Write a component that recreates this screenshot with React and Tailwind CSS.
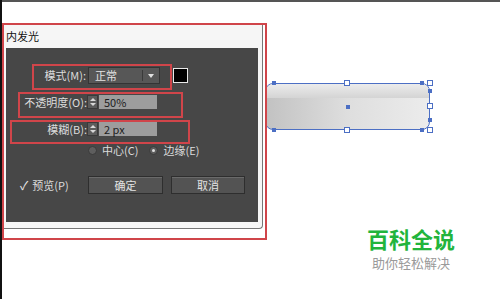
import React from 'react';

const cjk = { fontFamily: '"SimSun", "Noto Sans CJK SC", sans-serif' };

function Spinner() {
    return (
        <div className="flex h-[14px] w-[11px] flex-col items-center justify-center gap-[2px] bg-[#5c5c5c] border border-[#3a3a3a]">
            <div className="h-0 w-0 border-x-[3px] border-b-[3px] border-x-transparent border-b-[#d8d8d8]" />
            <div className="h-0 w-0 border-x-[3px] border-t-[3px] border-x-transparent border-t-[#d8d8d8]" />
        </div>
    );
}

function NumberField({ label, value }) {
    return (
        <div className="flex h-[14px] items-center">
            <span className="w-[81px] text-right leading-none">{label}</span>
            <Spinner />
            <div className="ml-[1px] flex h-[14px] w-[58px] items-center bg-[#9d9d9d] pl-[5px] text-[11px] text-[#1e1e1e]">
                {value}
            </div>
        </div>
    );
}

function Radio({ checked, label }) {
    return (
        <div className="flex items-center gap-[5px]">
            <div className="flex h-[9px] w-[9px] items-center justify-center rounded-full bg-[#5e5e5e] border border-[#3a3a3a]">
                {checked && <div className="h-[3px] w-[3px] rounded-full bg-[#e0e0e0]" />}
            </div>
            <span className="leading-none">{label}</span>
        </div>
    );
}

function Handle({ className }) {
    return <div className={'absolute h-[6px] w-[6px] border border-[#4c6fc4] bg-white ' + className} />;
}

function Dot({ className }) {
    return <div className={'absolute h-[4px] w-[4px] bg-[#4c6fc4] ' + className} />;
}

export default function App() {
    return (
        <div className="relative h-[299px] w-[500px] overflow-hidden bg-white" style={cjk}>
            {/* canvas window edges */}
            <div className="absolute left-0 top-0 h-[2px] w-full bg-[#555]" />
            <div className="absolute left-0 top-0 h-full w-[2px] bg-[#111]" />

            {/* artwork on the canvas */}
            <div className="absolute left-[265px] top-[83px] h-[47px] w-[165px] overflow-hidden rounded-[8px] border border-[#4c6fc4] bg-gradient-to-r from-[#c2c2c2] via-[#dedede] to-[#ececec]">
                <div className="h-[14px] w-full bg-gradient-to-b from-[#ececec] to-[#d4d4d4]" />
            </div>
            <Handle className="left-[344px] top-[80px]" />
            <Handle className="left-[427px] top-[80px]" />
            <Handle className="left-[427px] top-[103px]" />
            <Handle className="left-[427px] top-[127px]" />
            <Handle className="left-[344px] top-[127px]" />
            <Dot className="left-[346px] top-[105px]" />
            <Dot className="left-[272px] top-[81px]" />
            <Dot className="left-[420px] top-[81px]" />
            <Dot className="left-[428px] top-[89px]" />
            <Dot className="left-[428px] top-[118px]" />
            <Dot className="left-[420px] top-[128px]" />
            <Dot className="left-[272px] top-[128px]" />

            {/* Inner glow dialog */}
            <div className="absolute left-[4px] top-[25px] flex h-[204px] w-[259px] flex-col rounded-br-[4px] border-b border-r border-[#777] bg-[#f6f6f6]">
                <div className="flex h-[23px] items-center pl-[2px] text-[11px] text-[#111]">内发光</div>
                <div className="ml-[2px] mr-[4px] flex h-[174px] flex-col bg-[#474747] pt-[19px] text-[11px] text-[#dcdcdc]">
                    <div className="flex h-[17px] items-center">
                        <span className="w-[80px] text-right leading-none">模式(M):</span>
                        <div className="ml-[2px] flex h-[17px] w-[72px] items-center border border-[#343434] bg-[#575757]">
                            <span className="pl-[6px] leading-none text-[#e4e4e4]">正常</span>
                            <div className="ml-auto h-[11px] w-[1px] bg-[#3a3a3a]" />
                            <div className="mx-[5px] h-0 w-0 border-x-[3px] border-t-[4px] border-x-transparent border-t-[#e0e0e0]" />
                        </div>
                        <div className="ml-[13px] h-[15px] w-[15px] border border-[#e8e8e8] bg-black" />
                    </div>
                    <div className="mt-[11px]">
                        <NumberField label="不透明度(O):" value="50%" />
                    </div>
                    <div className="mt-[13px]">
                        <NumberField label="模糊(B):" value="2 px" />
                    </div>
                    <div className="mt-[7px] flex h-[14px] items-center pl-[82px]">
                        <Radio label="中心(C)" />
                        <div className="ml-[11px]">
                            <Radio checked label="边缘(E)" />
                        </div>
                    </div>
                    <div className="mt-[19px] flex h-[18px] items-center">
                        <div className="flex w-[82px] items-center gap-[4px] pl-[14px]">
                            <span className="text-[12px] leading-none text-[#e8e8e8]">✓</span>
                            <span className="leading-none">预览(P)</span>
                        </div>
                        <button className="h-[18px] w-[75px] border border-[#2e2e2e] bg-[#535353] text-[11px] text-[#e4e4e4] shadow-[inset_0_1px_0_#6a6a6a]">
                            确定
                        </button>
                        <button className="ml-[8px] h-[18px] w-[74px] border border-[#2e2e2e] bg-[#535353] text-[11px] text-[#e4e4e4] shadow-[inset_0_1px_0_#6a6a6a]">
                            取消
                        </button>
                    </div>
                </div>
            </div>

            {/* red annotation frames */}
            <div className="absolute left-[2px] top-[23px] h-[217px] w-[265px] border-2 border-[#d0454a]" />
            <div className="absolute left-[32px] top-[64px] h-[26px] w-[140px] border-2 border-[#d0454a]" />
            <div className="absolute left-[18px] top-[92px] h-[26px] w-[165px] border-2 border-[#d0454a]" />
            <div className="absolute left-[10px] top-[120px] h-[24px] w-[180px] border-2 border-[#d0454a]" />

            {/* watermark */}
            <div className="absolute left-[360px] top-[227px] flex w-[102px] flex-col items-center" style={{ fontFamily: '"Noto Sans CJK SC", sans-serif' }}>
                <span className="text-[22px] font-bold leading-none text-[#22b43c]">百科全说</span>
                <span className="mt-[7px] text-[13px] leading-none text-[#9a9a9a]">助你轻松解决</span>
            </div>
        </div>
    );
}
